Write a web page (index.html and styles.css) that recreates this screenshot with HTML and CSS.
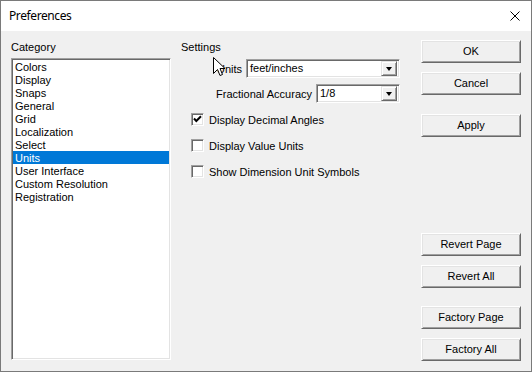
FILE: index.html
```html
<!DOCTYPE html>
<html>
<head>
<meta charset="utf-8">
<link rel="stylesheet" href="styles.css">
</head>
<body>
<div class="window">
  <div class="titlebar">
    <span class="title">Preferences</span>
    <svg class="close" width="10" height="10" viewBox="0 0 10 10"><path d="M0.5 0.5 L9.5 9.5 M9.5 0.5 L0.5 9.5" stroke="#000" stroke-width="1" fill="none"/></svg>
  </div>
  <div class="content">
    <div class="col-cat">
      <div class="label">Category</div>
      <div class="listbox">
        <div class="item">Colors</div>
        <div class="item">Display</div>
        <div class="item">Snaps</div>
        <div class="item">General</div>
        <div class="item">Grid</div>
        <div class="item">Localization</div>
        <div class="item">Select</div>
        <div class="item selected">Units</div>
        <div class="item">User Interface</div>
        <div class="item">Custom Resolution</div>
        <div class="item">Registration</div>
      </div>
    </div>
    <div class="col-settings">
      <div class="label">Settings</div>
      <div class="field-row first">
        <span class="field-label">Units</span>
        <div class="combo combo-wide"><span class="combo-text">feet/inches</span><span class="combo-btn"><span class="tri"></span></span></div>
      </div>
      <div class="field-row">
        <span class="field-label">Fractional Accuracy</span>
        <div class="combo combo-narrow"><span class="combo-text">1/8</span><span class="combo-btn"><span class="tri"></span></span></div>
      </div>
      <div class="checks">
        <div class="check-row">
          <span class="checkbox"><svg width="9" height="9" viewBox="0 0 9 9"><path d="M1 3.5 L3.3 6 L8 1.2" stroke="#000" stroke-width="2" fill="none"/></svg></span>
          <span>Display Decimal Angles</span>
        </div>
        <div class="check-row">
          <span class="checkbox"></span>
          <span>Display Value Units</span>
        </div>
        <div class="check-row">
          <span class="checkbox"></span>
          <span>Show Dimension Unit Symbols</span>
        </div>
      </div>
    </div>
    <div class="col-buttons">
      <div class="btn">OK</div>
      <div class="btn gap-s">Cancel</div>
      <div class="btn gap-m">Apply</div>
      <div class="spacer"></div>
      <div class="btn">Revert Page</div>
      <div class="btn gap-s">Revert All</div>
      <div class="btn gap-m2">Factory Page</div>
      <div class="btn gap-s">Factory All</div>
    </div>
  </div>
  <svg class="cursor" width="13" height="20" viewBox="0 0 13 20"><path d="M0.5 0.5 L0.5 16.5 L4.5 12.5 L7 18.5 L9.5 17.5 L7 11.5 L12 11.5 Z" fill="#fff" stroke="#000" stroke-width="1" stroke-linejoin="miter"/></svg>
</div>
</body>
</html>
```
FILE: styles.css
```css
* { box-sizing: border-box; }
html, body { margin: 0; padding: 0; background: #f0f0f0; }
body {
  font-family: "Liberation Sans", Arial, sans-serif;
  font-size: 11px;
  color: #000;
}
.window {
  position: relative;
  width: 532px;
  height: 372px;
  border: 1px solid #7a7a7a;
  background: #f0f0f0;
  overflow: hidden;
}
.titlebar {
  height: 30px;
  background: #fff;
  display: flex;
  align-items: center;
  justify-content: space-between;
  padding: 0 11px 1px 8px;
}
.title {
  font-family: "Noto Sans", "Open Sans", sans-serif;
  font-size: 12px;
  letter-spacing: -0.4px;
}
.close { display: block; margin-top: 1px; }
.content {
  display: flex;
  height: 340px;
}
.label { height: 13px; line-height: 13px; }
.col-cat {
  margin-left: 10px;
  width: 160px;
  padding-top: 10px;
}
.listbox {
  margin-top: 4px;
  height: 302px;
  background: #fff;
  border: 1px solid;
  border-color: #a0a0a0 #fff #fff #a0a0a0;
  box-shadow: inset 1px 1px 0 #696969, inset -1px -1px 0 #e3e3e3;
  padding: 1px;
}
.item {
  height: 13px;
  line-height: 14px;
  padding-left: 2px;
  white-space: nowrap;
}
.item.selected { background: #0078d7; color: #fff; }
.col-settings {
  margin-left: 10px;
  width: 219px;
  padding-top: 10px;
}
.field-row {
  display: flex;
  justify-content: flex-end;
  align-items: center;
  margin-top: 6px;
  height: 19px;
}
.field-row.first { margin-top: 5px; }
.field-label { margin-right: 4px; }
.combo {
  position: relative;
  height: 19px;
  background: #fff;
  border: 1px solid;
  border-color: #a0a0a0 #fff #fff #a0a0a0;
  box-shadow: inset 1px 1px 0 #696969, inset -1px -1px 0 #e3e3e3;
  display: flex;
  align-items: center;
  padding: 2px;
}
.combo-wide { width: 154px; }
.combo-narrow { width: 84px; }
.combo-text { flex: 1; padding-left: 1px; line-height: 13px; }
.combo-btn {
  width: 16px;
  height: 15px;
  background: #f0f0f0;
  border: 1px solid;
  border-color: #e3e3e3 #696969 #696969 #e3e3e3;
  box-shadow: inset 1px 1px 0 #fff, inset -1px -1px 0 #a0a0a0;
  display: flex;
  align-items: center;
  justify-content: center;
}
.tri {
  width: 0;
  height: 0;
  border-left: 3.5px solid transparent;
  border-right: 3.5px solid transparent;
  border-top: 4px solid #000;
  margin-top: 1px;
}
.checks {
  padding-left: 10px;
  padding-top: 10px;
  display: flex;
  flex-direction: column;
  gap: 13px;
}
.check-row {
  display: flex;
  align-items: center;
  height: 13px;
  gap: 5px;
}
.checkbox {
  width: 13px;
  height: 13px;
  background: #fff;
  border: 1px solid;
  border-color: #a0a0a0 #fff #fff #a0a0a0;
  box-shadow: inset 1px 1px 0 #696969, inset -1px -1px 0 #e3e3e3;
  display: flex;
  align-items: center;
  justify-content: center;
}
.checkbox svg { display: block; }
.col-buttons {
  margin-left: 21px;
  width: 100px;
  padding-top: 9px;
  padding-bottom: 10px;
  display: flex;
  flex-direction: column;
}
.btn {
  height: 23px;
  line-height: 21px;
  text-align: center;
  background: #f0f0f0;
  border: 1px solid;
  border-color: #fff #696969 #696969 #fff;
  box-shadow: inset 1px 1px 0 #e3e3e3, inset -1px -1px 0 #a0a0a0;
}
.gap-s { margin-top: 9px; }
.gap-m { margin-top: 19px; }
.gap-m2 { margin-top: 18px; }
.spacer { flex: 1; }
.cursor {
  position: absolute;
  left: 212px;
  top: 56px;
}
```
